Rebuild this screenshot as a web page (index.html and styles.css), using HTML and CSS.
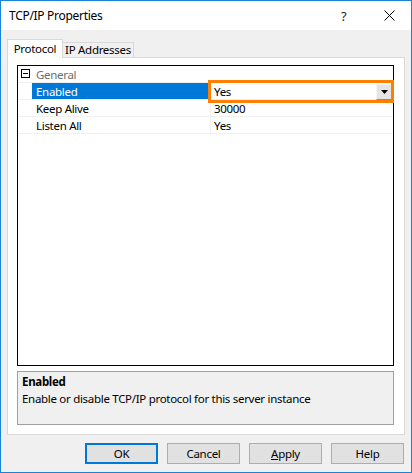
FILE: index.html
```html
<!DOCTYPE html>
<html>
<head>
<meta charset="utf-8">
<link rel="stylesheet" href="styles.css">
</head>
<body>
<div class="window">
  <div class="titlebar">
    <span class="title">TCP/IP Properties</span>
    <span class="help">?</span>
    <span class="close"><svg width="11" height="11" viewBox="0 0 11 11"><path d="M0.5 0.5 L10.5 10.5 M10.5 0.5 L0.5 10.5" stroke="#000" stroke-width="1" fill="none"/></svg></span>
  </div>
  <div class="content">
    <div class="tabs">
      <div class="tab active">Protocol</div>
      <div class="tab">IP Addresses</div>
    </div>
    <div class="panel">
      <div class="grid">
        <div class="row cat">
          <span class="gutter"><span class="expander"></span></span>
          <span class="name">General</span>
        </div>
        <div class="row sel">
          <span class="gutter"></span>
          <span class="name">Enabled</span>
          <span class="value">Yes<span class="dropbtn"><svg width="7" height="4" viewBox="0 0 7 4"><path d="M0 0 H7 L3.5 4 Z" fill="#000"/></svg></span></span>
        </div>
        <div class="row">
          <span class="gutter"></span>
          <span class="name">Keep Alive</span>
          <span class="value">30000</span>
        </div>
        <div class="row">
          <span class="gutter"></span>
          <span class="name">Listen All</span>
          <span class="value">Yes</span>
        </div>
        <div class="highlight"></div>
      </div>
      <div class="desc">
        <div class="desc-title">Enabled</div>
        <div class="desc-text">Enable or disable TCP/IP protocol for this server instance</div>
      </div>
    </div>
    <div class="buttons">
      <button class="btn default">OK</button>
      <button class="btn">Cancel</button>
      <button class="btn"><u>A</u>pply</button>
      <button class="btn">Help</button>
    </div>
  </div>
</div>
</body>
</html>
```
FILE: styles.css
```css
* { box-sizing: border-box; }
html, body { margin: 0; padding: 0; background: #fff; }
body {
  font-family: "Noto Sans", "Open Sans", sans-serif;
  font-size: 11.5px;
  letter-spacing: -0.3px;
  color: #000;
}
.window {
  width: 412px;
  height: 473px;
  border: 1px solid #1883d7;
  background: #f0f0f0;
  display: flex;
  flex-direction: column;
}
.titlebar {
  height: 29px;
  background: #fff;
  display: flex;
  align-items: center;
  padding-left: 8px;
}
.title { flex: 1; font-size: 12px; letter-spacing: -0.3px; }
.help { width: 12px; margin-right: 31px; font-size: 13px; color: #222; }
.close { width: 11px; height: 11px; margin-right: 16px; display: flex; }
.content {
  flex: 1;
  padding: 9px 6px 0 6px;
  display: flex;
  flex-direction: column;
}
.tabs {
  display: flex;
  height: 18px;
  align-items: flex-end;
  position: relative;
  z-index: 1;
}
.tab {
  width: 72px;
  height: 15px;
  border: 1px solid #d9d9d9;
  border-bottom: none;
  background: #f0f0f0;
  text-align: center;
  line-height: 13px;
  margin-left: -1px;
}
.tab.active {
  width: 56px;
  height: 19px;
  margin-bottom: -1px;
  background: #fff;
  line-height: 17px;
  margin-left: 0;
}
.panel {
  height: 378px;
  border: 1px solid #d9d9d9;
  background: #fff;
  padding: 7px 10px 8px 9px;
  display: flex;
  flex-direction: column;
}
.grid {
  height: 301px;
  border: 1px solid #000;
  background: #fff;
  position: relative;
}
.row {
  display: flex;
  height: 17px;
  border-bottom: 1px solid #f0f0f0;
  line-height: 18px;
}
.gutter {
  width: 14px;
  position: relative;
  flex: none;
}
.expander {
  position: absolute;
  left: 3px;
  top: 3px;
  width: 9px;
  height: 9px;
  border: 1px solid #000;
}
.expander::after {
  content: "";
  position: absolute;
  left: 1px;
  top: 3px;
  width: 5px;
  height: 1px;
  background: #000;
}
.name {
  width: 179px;
  padding-left: 4px;
  border-right: 1px solid #f0f0f0;
  flex: none;
  height: 16px;
}
.cat .name { color: #6d6d6d; border-right: none; }
.sel .name { background: #0078d7; color: #fff; }
.value {
  flex: 1;
  padding-left: 3px;
  position: relative;
  height: 16px;
}
.dropbtn {
  position: absolute;
  right: 1px;
  top: 1px;
  width: 16px;
  height: 16px;
  background: #e5e5e5;
  border: 1px solid #f4f4f4;
  border-bottom: 1px solid #8a8a8a;
  border-right: 1px solid #a0a0a0;
  display: flex;
  align-items: center;
  justify-content: center;
}
.highlight {
  position: absolute;
  left: 190px;
  top: 14px;
  width: 186px;
  height: 23px;
  border: 3px solid #ff7f00;
}
.desc {
  margin-top: 5px;
  height: 54px;
  border: 1px solid #a0a0a0;
  background: #f0f0f0;
  padding: 1px 4px;
  line-height: 17px;
}
.desc-title { font-weight: bold; }
.buttons {
  display: flex;
  justify-content: flex-end;
  gap: 9px;
  margin-top: 8px;
  padding-right: 1px;
}
.btn {
  width: 73px;
  height: 21px;
  font-family: inherit;
  font-size: 11.5px;
  letter-spacing: -0.3px;
  background: #e1e1e1;
  border: 1px solid #adadad;
  padding: 0;
  color: #000;
}
.btn.default { border: 2px solid #0078d7; }
```
